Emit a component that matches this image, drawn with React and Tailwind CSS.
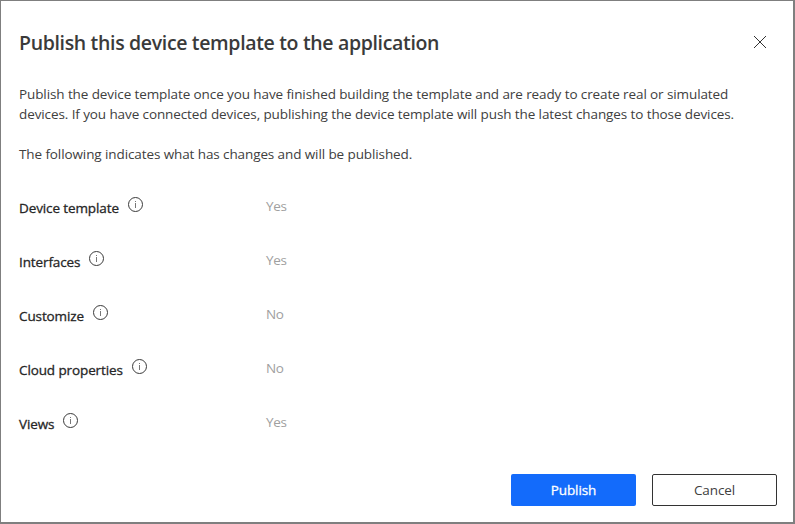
import React from "react";

const rows = [
  { label: "Device template", value: "Yes" },
  { label: "Interfaces", value: "Yes" },
  { label: "Customize", value: "No" },
  { label: "Cloud properties", value: "No" },
  { label: "Views", value: "Yes" },
];

function InfoIcon() {
  return (
    <svg width="15" height="15" viewBox="0 0 15 15" fill="none" stroke="#3a3a3a" className="shrink-0">
      <circle cx="7.5" cy="7.5" r="7" strokeWidth="1" />
      <path d="M7.5 6v5M7.5 4v1" stroke="#777" />
    </svg>
  );
}

export default function App() {
  return (
    <div className="flex h-[524px] w-[795px] flex-col border-t border-r-2 border-b-2 border-l border-[#7f7f7f] bg-white pl-[18px] font-['Open_Sans',sans-serif] text-[#404040]">
      <header className="flex h-[83px] items-start justify-between pt-[28px] pr-[26px]">
        <h1 className="text-[19.5px] leading-[28px] font-semibold tracking-[-0.34px] whitespace-nowrap text-[#3a3a3a]">
          Publish this device template to the application
        </h1>
        <svg width="14" height="14" viewBox="0 0 14 14" stroke="#333" strokeWidth="1" className="mt-[6px]">
          <path d="M1 1l12 12M13 1L1 13" />
        </svg>
      </header>
      <div className="h-[100px] text-[13.5px] leading-[20px] tracking-[-0.1px] whitespace-nowrap">
        <p>
          Publish the device template once you have finished building the template and are ready to create real or simulated
          <br />
          devices. If you have connected devices, publishing the device template will push the latest changes to those devices.
        </p>
        <p className="mt-5">The following indicates what has changes and will be published.</p>
      </div>
      <dl className="text-[13.5px] leading-[20px]">
        {rows.map((row) => (
          <div key={row.label} className="flex h-[54px] items-start">
            <dt className="flex w-[247px] items-start gap-[9px] tracking-[-0.11px] text-[#262626] [-webkit-text-stroke:0.3px_#262626]">
              <span className="mt-[14px]">{row.label}</span>
              <span className="mt-[13px]"><InfoIcon /></span>
            </dt>
            <dd className="mt-[12px] tracking-[-0.3px] text-[#a0a0a0]">{row.value}</dd>
          </div>
        ))}
      </dl>
      <footer className="mt-[20px] flex justify-end gap-4 pr-[16px] text-[13.5px]">
        <button className="h-8 w-[125px] rounded-[2px] bg-[#136bfb] tracking-[-0.1px] text-white [-webkit-text-stroke:0.3px_white]">Publish</button>
        <button className="h-8 w-[125px] rounded-[2px] border border-[#333] tracking-[-0.1px]">Cancel</button>
      </footer>
    </div>
  );
}
